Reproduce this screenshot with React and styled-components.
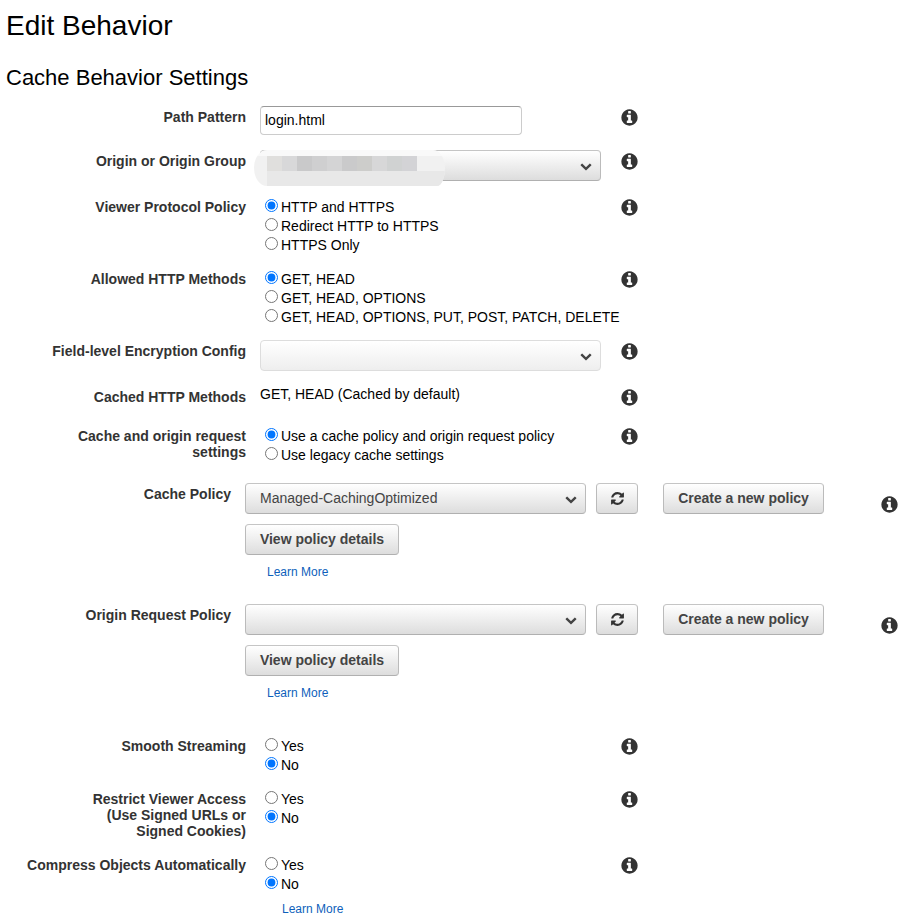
import React from 'react';
import styled, { createGlobalStyle } from 'styled-components';

const Global = createGlobalStyle`
  * { box-sizing: border-box; }
  body {
    margin: 0;
    background: #fff;
    color: #000;
    font: 14px/19px "Liberation Sans", Arial, sans-serif;
    overflow: hidden;
  }
`;

const Page = styled.main`
  width: 919px;
  height: 923px;
  overflow: hidden;
`;

const Title = styled.h1`
  margin: 0;
  padding: 9px 0 0 6px;
  height: 60px;
  font-size: 28px;
  line-height: 34px;
  font-weight: 400;
`;

const Subtitle = styled.h2`
  margin: 0;
  padding: 5px 0 0 6px;
  height: 46px;
  font-size: 22px;
  line-height: 26px;
  font-weight: 400;
`;

const Row = styled.div`
  display: grid;
  grid-template-columns: ${(p) => (p.$wide ? '231px 621px 1fr' : '246px 346px 1fr')};
  column-gap: 14px;
  height: ${(p) => p.$height}px;
`;

const Label = styled.div`
  padding-top: 3px;
  font-weight: 700;
  line-height: 16px;
  text-align: right;
  white-space: pre-line;
  color: #333;
`;

const Hint = styled.div`
  padding-top: ${(p) => (p.$wide ? 12 : 2)}px;
  line-height: 0;
`;

const Svg = styled.svg`
  display: block;
  width: ${(p) => p.$size}px;
  height: ${(p) => p.$size}px;
  fill: #333;
`;

const TextInput = styled.input`
  display: block;
  width: 262px;
  height: 29px;
  padding: 0 4px 1px;
  border: 1px solid #ccc;
  border-top-color: #999;
  border-radius: 4px;
  background: #fff;
  color: #000;
  font: inherit;
  outline: 0;
`;

const Button = styled.button`
  display: flex;
  align-items: center;
  justify-content: center;
  width: ${(p) => p.$width}px;
  height: 31px;
  padding: 0 0 1px;
  border: 1px solid #bbb;
  border-color: #c5c5c5 #bbb #b0b0b0;
  border-radius: 4px;
  background: linear-gradient(#fff, #ddd);
  color: #444;
  font: inherit;
  font-weight: 700;
`;

const SelectBox = styled(Button)`
  position: relative;
  justify-content: space-between;
  width: 341px;
  padding: 0 8.5px 1px 14px;
  font-weight: 400;
  border-color: ${(p) => (p.$muted ? '#ddd' : '#c5c5c5 #bbb #b0b0b0')};
  background: ${(p) => (p.$muted ? 'linear-gradient(#fff, #eee)' : 'linear-gradient(#fff, #ddd)')};

  svg { margin-top: 2px; fill: #444; }
`;

const Redaction = styled.span`
  position: absolute;
  left: -7px;
  top: -1px;
  width: 191px;
  height: 36px;
  padding: 6px 0 0 13px;
  border-radius: 13px 12px 8px 13px / 18px;
  overflow: hidden;
  background: linear-gradient(#f9f9f9 6px, #f1f1f1 6px);
`;

const Cells = styled.span`
  display: flex;
  height: 15px;
`;

const Cell = styled.span`
  width: 15px;
  background: ${(p) => p.$tone};
`;

const Band = styled.span`
  display: block;
  height: 15px;
  background: #e8e8e8;
`;

const Options = styled.div`
  padding: 2px 0 0 5px;
`;

const Option = styled.label`
  display: flex;
  align-items: flex-start;
  height: 19px;
  white-space: nowrap;
`;

const Radio = styled.input`
  flex: none;
  width: 13px;
  height: 13px;
  margin: 1px 3px 0 0;
`;

const PlainValue = styled.div`
  line-height: 17px;
`;

const Controls = styled.div`
  display: flex;
  align-items: center;
`;

const Spacer = styled.span`
  width: ${(p) => p.$width}px;
`;

const Details = styled.div`
  padding-top: 10px;
`;

const Link = styled.a`
  display: block;
  padding: ${(p) => p.$pad};
  font-size: 12px;
  line-height: 16px;
  color: #0e5fbb;
`;

const INFO = 'M1152 1376v-160q0-14-9-23t-23-9h-96v-512q0-14-9-23t-23-9h-320q-14 0-23 9t-9 23v160q0 14 9 23t23 9h96v320h-96q-14 0-23 9t-9 23v160q0 14 9 23t23 9h448q14 0 23-9t9-23zm-128-896v-160q0-14-9-23t-23-9h-192q-14 0-23 9t-9 23v160q0 14 9 23t23 9h192q14 0 23-9t9-23zm640 416q0 209-103 385.5t-279.5 279.5-385.5 103-385.5-103-279.5-279.5-103-385.5 103-385.5 279.5-279.5 385.5-103 385.5 103 279.5 279.5 103 385.5z';
const REFRESH = 'M1639 1056q0 5-1 7-64 268-268 434.5t-478 166.5q-146 0-282.5-55t-243.5-157l-129 129q-19 19-45 19t-45-19-19-45v-448q0-26 19-45t45-19h448q26 0 45 19t19 45-19 45l-137 137q71 66 161 102t187 36q134 0 250-65t186-179q11-17 53-117 8-23 30-23h192q13 0 22.5 9.5t9.5 22.5zm25-800v448q0 26-19 45t-45 19h-448q-26 0-45-19t-19-45 19-45l138-138q-148-137-349-137-134 0-250 65t-186 179q-11 17-53 117-8 23-30 23h-199q-13 0-22.5-9.5t-9.5-22.5v-7q65-268 270-434.5t480-166.5q146 0 284 55.5t245 156.5l130-129q19-19 45-19t45 19 19 45z';
const CHEVRON = 'M1683 808l-742 741q-19 19-45 19t-45-19l-742-741q-19-19-19-45.5t19-45.5l166-165q19-19 45-19t45 19l531 531 531-531q19-19 45-19t45 19l166 165q19 19 19 45.5t-19 45.5z';

const Icon = ({ d, size }) => (
  <Svg $size={size} viewBox="0 0 1792 1792" aria-hidden="true">
    <path d={d} />
  </Svg>
);

const Field = ({ label, height, wide, children }) => (
  <Row $height={height} $wide={wide}>
    <Label>{label}</Label>
    <div>{children}</div>
    <Hint $wide={wide}><Icon d={INFO} size={19} /></Hint>
  </Row>
);

const Select = ({ value, muted, children }) => (
  <SelectBox type="button" $muted={muted}>
    <span>{value}</span>
    {children}
    <Icon d={CHEVRON} size={12} />
  </SelectBox>
);

const RadioGroup = ({ name, options, selected = 0 }) => (
  <Options>
    {options.map((text, i) => (
      <Option key={text}>
        <Radio type="radio" name={name} defaultChecked={i === selected} />
        {text}
      </Option>
    ))}
  </Options>
);

const PolicyField = ({ label, value, height }) => (
  <Field label={label} height={height} wide>
    <Controls>
      <Select value={value} />
      <Spacer $width={10} />
      <Button type="button" $width={42} aria-label="Refresh"><Icon d={REFRESH} size={15} /></Button>
      <Spacer $width={25} />
      <Button type="button" $width={161}>Create a new policy</Button>
    </Controls>
    <Details>
      <Button type="button" $width={154}>View policy details</Button>
      <Link $pad="9px 0 0 22px">Learn More</Link>
    </Details>
  </Field>
);

const TONES = ['#e0dfdd', '#d8d8d9', '#c9c9ca', '#cfcfd0', '#d4d4d5', '#cacacb', '#cdcdcb', '#d7d7d8', '#d0d2d2', '#d3d3d6'];

export default function App() {
  return (
    <Page>
      <Global />
      <Title>Edit Behavior</Title>
      <Subtitle>Cache Behavior Settings</Subtitle>
      <Field label="Path Pattern" height={44}>
        <TextInput defaultValue="login.html" />
      </Field>
      <Field label="Origin or Origin Group" height={46}>
        <Select>
          <Redaction>
            <Cells>{TONES.map((tone) => <Cell key={tone} $tone={tone} />)}</Cells>
            <Band />
          </Redaction>
        </Select>
      </Field>
      <Field label="Viewer Protocol Policy" height={72}>
        <RadioGroup name="viewer" options={['HTTP and HTTPS', 'Redirect HTTP to HTTPS', 'HTTPS Only']} />
      </Field>
      <Field label="Allowed HTTP Methods" height={72}>
        <RadioGroup name="methods" options={['GET, HEAD', 'GET, HEAD, OPTIONS', 'GET, HEAD, OPTIONS, PUT, POST, PATCH, DELETE']} />
      </Field>
      <Field label="Field-level Encryption Config" height={46}>
        <Select muted />
      </Field>
      <Field label="Cached HTTP Methods" height={39}>
        <PlainValue>GET, HEAD (Cached by default)</PlainValue>
      </Field>
      <Field label={'Cache and origin request\nsettings'} height={58}>
        <RadioGroup name="cache" options={['Use a cache policy and origin request policy', 'Use legacy cache settings']} />
      </Field>
      <PolicyField label="Cache Policy" value="Managed-CachingOptimized" height={121} />
      <PolicyField label="Origin Request Policy" height={131} />
      <Field label="Smooth Streaming" height={53}>
        <RadioGroup name="smooth" options={['Yes', 'No']} selected={1} />
      </Field>
      <Field label={'Restrict Viewer Access\n(Use Signed URLs or\nSigned Cookies)'} height={66}>
        <RadioGroup name="restrict" options={['Yes', 'No']} selected={1} />
      </Field>
      <Field label="Compress Objects Automatically" height={69}>
        <RadioGroup name="compress" options={['Yes', 'No']} selected={1} />
        <Link $pad="7px 0 0 22px">Learn More</Link>
      </Field>
    </Page>
  );
}
